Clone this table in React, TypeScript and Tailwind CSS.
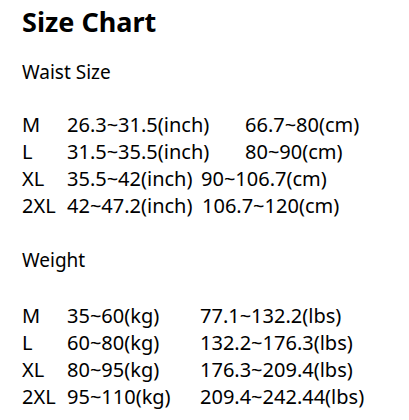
import React from "react";

const font = { fontFamily: '"Noto Sans", "Open Sans", sans-serif' };

function Row({ a, b, c, bw }: { a: string; b: string; c: string; bw: number }) {
  return (
    <div className="flex h-[27px] items-center whitespace-pre text-[20px] leading-[27px] text-black">
      <span className="w-[45px] shrink-0">{a}</span>
      <span className="shrink-0" style={{ width: bw }}>{b}</span>
      <span>{c}</span>
    </div>
  );
}

export default function App() {
  return (
    <div className="h-[420px] w-[409px] bg-white pl-[22px] text-black" style={font}>
      <div className="pt-[3px] text-[27px] font-bold leading-[38px]">Size Chart</div>
      <div className="mt-[18px] text-[19px] leading-[26px]">Waist Size</div>
      <div className="mt-[26px]">
        <Row a="M" b="26.3~31.5(inch)" c="66.7~80(cm)" bw={178} />
        <Row a="L" b="31.5~35.5(inch)" c="80~90(cm)" bw={178} />
        <Row a="XL" b="35.5~42(inch)" c="90~106.7(cm)" bw={134} />
        <Row a="2XL" b="42~47.2(inch)" c="106.7~120(cm)" bw={135} />
      </div>
      <div className="mt-[28px] text-[19px] leading-[26px]">Weight</div>
      <div className="mt-[29px]">
        <Row a="M" b="35~60(kg)" c="77.1~132.2(lbs)" bw={133} />
        <Row a="L" b="60~80(kg)" c="132.2~176.3(lbs)" bw={133} />
        <Row a="XL" b="80~95(kg)" c="176.3~209.4(lbs)" bw={133} />
        <Row a="2XL" b="95~110(kg)" c="209.4~242.44(lbs)" bw={133} />
      </div>
    </div>
  );
}
